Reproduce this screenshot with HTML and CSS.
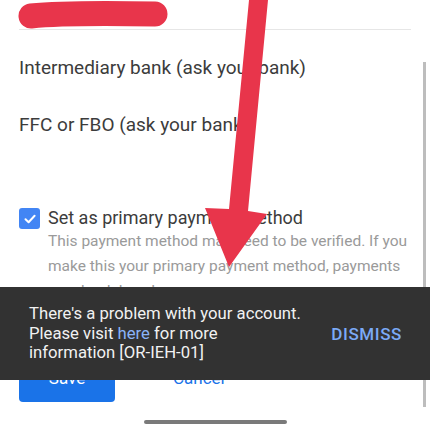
FILE: index.html
```html
<!DOCTYPE html>
<html>
<head>
  <title>Payment method</title>
  <link rel="stylesheet" href="styles.css">
</head>
<body>
  <div class="screen">
    <div class="page">
      <div class="page-header"></div>

      <div class="field">Intermediary bank (ask your bank)</div>
      <div class="field">FFC or FBO (ask your bank)</div>

      <div class="primary-row">
        <span class="checkbox">
          <svg width="14" height="14" viewBox="0 0 14 14"><path d="M2.5 7.2 L5.6 10.2 L11.6 3.8" fill="none" stroke="#fff" stroke-width="2" stroke-linecap="round" stroke-linejoin="round"/></svg>
        </span>
        <div class="primary-text">
          <div class="primary-label">Set as primary payment method</div>
          <div class="primary-note">This payment method may need to be verified. If you make this your primary payment method, payments may be delayed.</div>
        </div>
      </div>

      <div class="actions">
        <button class="btn-save">Save</button>
        <button class="btn-cancel">Cancel</button>
      </div>

      <div class="home-bar"></div>
    </div>

    <div class="scrollbar"></div>

    <div class="snackbar">
      <div class="snackbar-text">There's a problem with your account.<br>Please visit <a href="#">here</a> for more<br>information [OR-IEH-01]</div>
      <button class="snackbar-action">DISMISS</button>
    </div>

    <!-- red markup drawn over the screenshot -->
    <svg class="markup" width="430" height="430" viewBox="0 0 430 430">
      <path d="M31 16 C60 13 100 13 155 14" fill="none" stroke="#e8354b" stroke-width="25" stroke-linecap="round"/>
      <polygon points="249,0 268,0 248,211 267,214 229,267 205,208 229,209" fill="#e8354b"/>
    </svg>
  </div>
</body>
</html>
```

FILE: styles.css
```css
body {
  margin: 0;
  background: #fff;
  font-family: Roboto, "Noto Sans", Arial, sans-serif;
}

.screen {
  position: relative;
  width: 430px;
  height: 430px;
  overflow: hidden;
}

.page {
  display: flex;
  flex-direction: column;
  padding: 0 19px;
}

.page-header {
  height: 29px;
  border-bottom: 1px solid #e6e6e6;
}

.field {
  font-size: 19px;
  line-height: 24px;
  color: #3c3c3c;
  margin-top: 26px;
  height: 31px;
}

.primary-row {
  display: flex;
  gap: 8px;
  margin-top: 63px;
}

.checkbox {
  flex: none;
  width: 21px;
  height: 21px;
  margin-top: 1px;
  border-radius: 3px;
  background: #4285f4;
  display: flex;
  align-items: center;
  justify-content: center;
}

.primary-label {
  font-size: 18px;
  line-height: 22px;
  color: #3c3c3c;
}

.primary-note {
  font-size: 15.5px;
  line-height: 25px;
  color: #9a9a9a;
}

.actions {
  display: flex;
  align-items: center;
  gap: 30px;
  margin-top: 56px;
}

.btn-save {
  width: 96px;
  height: 42px;
  padding: 0 0 7px;
  border: none;
  border-radius: 4px;
  background: #1a73e8;
  color: #fff;
  font-family: inherit;
  font-size: 17px;
}

.btn-cancel {
  height: 42px;
  border: none;
  background: none;
  padding: 0 28px 7px;
  color: #1a73e8;
  font-family: inherit;
  font-size: 17px;
}

.home-bar {
  align-self: center;
  width: 143px;
  height: 4px;
  margin-top: 18px;
  border-radius: 2px;
  background: #7a7a7a;
}

.scrollbar {
  position: absolute;
  left: 423px;
  top: 62px;
  width: 3px;
  height: 345px;
  background: #bdbdbd;
}

.snackbar {
  position: absolute;
  left: 0;
  top: 287px;
  width: 430px;
  height: 93px;
  box-sizing: border-box;
  padding: 0 28px 0 29px;
  background: #323232;
  display: flex;
  align-items: center;
  justify-content: space-between;
}

.snackbar-text {
  font-size: 16.7px;
  line-height: 19.5px;
  color: #f1f1f1;
}

.snackbar-text a {
  color: #8ab4f8;
  text-decoration: none;
}

.snackbar-action {
  border: none;
  background: none;
  padding: 0;
  color: #7baaf7;
  font-family: inherit;
  font-size: 17px;
  font-weight: 500;
  letter-spacing: 0.6px;
}

.markup {
  position: absolute;
  left: 0;
  top: 0;
}
```
